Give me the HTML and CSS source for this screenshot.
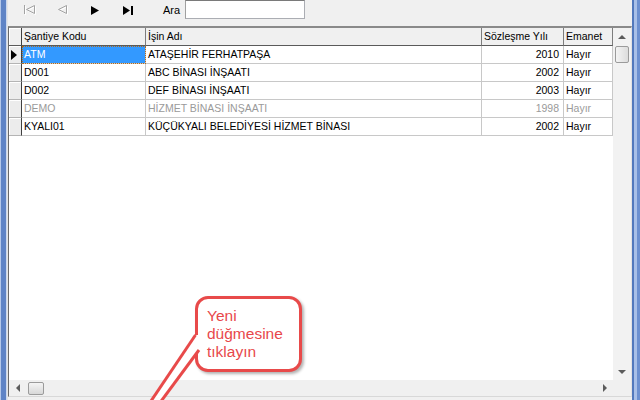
FILE: index.html
```html
<!DOCTYPE html>
<html lang="tr">
<head>
    <meta charset="UTF-8">
    <title>Şantiyeler</title>
    <link rel="stylesheet" href="styles.css">
</head>
<body>
    <div class="window">
        <div class="frame frame-left"></div>
        <div class="client">
            <div class="toolbar">
                <button class="nav-btn" disabled>
                    <svg width="14" height="11" viewBox="0 0 14 11">
                        <g transform="translate(1,1)" fill="none" stroke="#fff" stroke-width="1">
                            <line x1="1.5" y1="0" x2="1.5" y2="9"/>
                            <polygon points="11.5,0.5 3.5,4.5 11.5,8.5"/>
                        </g>
                        <g fill="none" stroke="#a3a3a3" stroke-width="1">
                            <line x1="1.5" y1="0" x2="1.5" y2="9"/>
                            <polygon points="11.5,0.5 3.5,4.5 11.5,8.5"/>
                        </g>
                    </svg>
                </button>
                <button class="nav-btn" disabled>
                    <svg width="12" height="11" viewBox="0 0 12 11">
                        <polygon transform="translate(1,1)" points="9.5,0.5 1.5,4.5 9.5,8.5" fill="none" stroke="#fff"/>
                        <polygon points="9.5,0.5 1.5,4.5 9.5,8.5" fill="none" stroke="#a3a3a3"/>
                    </svg>
                </button>
                <button class="nav-btn">
                    <svg width="9" height="9" viewBox="0 0 9 9">
                        <polygon points="0,0 8,4.5 0,9" fill="#000"/>
                    </svg>
                </button>
                <button class="nav-btn">
                    <svg width="11" height="9" viewBox="0 0 11 9">
                        <polygon points="0,0 7,4.5 0,9" fill="#000"/>
                        <rect x="8" y="0" width="2" height="9" fill="#000"/>
                    </svg>
                </button>
                <label class="search-label" for="search">Ara</label>
                <input id="search" class="search-input" type="text">
            </div>

            <div class="grid">
                <div class="grid-data">
                    <div class="row head">
                        <div class="cell ind"></div>
                        <div class="cell c-code">Şantiye Kodu</div>
                        <div class="cell c-name">İşin Adı</div>
                        <div class="cell c-year">Sözleşme Yılı</div>
                        <div class="cell c-flag">Emanet</div>
                    </div>
                    <div class="row current">
                        <div class="cell ind"><span class="pointer"></span></div>
                        <div class="cell c-code selected">ATM</div>
                        <div class="cell c-name">ATAŞEHİR FERHATPAŞA</div>
                        <div class="cell c-year num">2010</div>
                        <div class="cell c-flag">Hayır</div>
                    </div>
                    <div class="row">
                        <div class="cell ind"></div>
                        <div class="cell c-code">D001</div>
                        <div class="cell c-name">ABC BİNASI İNŞAATI</div>
                        <div class="cell c-year num">2002</div>
                        <div class="cell c-flag">Hayır</div>
                    </div>
                    <div class="row">
                        <div class="cell ind"></div>
                        <div class="cell c-code">D002</div>
                        <div class="cell c-name">DEF BİNASI İNŞAATI</div>
                        <div class="cell c-year num">2003</div>
                        <div class="cell c-flag">Hayır</div>
                    </div>
                    <div class="row passive">
                        <div class="cell ind"></div>
                        <div class="cell c-code">DEMO</div>
                        <div class="cell c-name">HİZMET BİNASI İNŞAATI</div>
                        <div class="cell c-year num">1998</div>
                        <div class="cell c-flag">Hayır</div>
                    </div>
                    <div class="row">
                        <div class="cell ind"></div>
                        <div class="cell c-code">KYALI01</div>
                        <div class="cell c-name">KÜÇÜKYALI BELEDİYESİ HİZMET BİNASI</div>
                        <div class="cell c-year num">2002</div>
                        <div class="cell c-flag">Hayır</div>
                    </div>
                </div>

                <div class="vscroll">
                    <div class="sb-btn"><span class="arrow up"></span></div>
                    <div class="sb-track vtrack"><div class="thumb vthumb"></div></div>
                    <div class="sb-btn"><span class="arrow down"></span></div>
                </div>
                <div class="hscroll">
                    <div class="sb-btn hbtn"><span class="arrow left"></span></div>
                    <div class="sb-track htrack"><div class="thumb hthumb"></div></div>
                    <div class="sb-btn hbtn"><span class="arrow right"></span></div>
                </div>
                <div class="corner"></div>
            </div>
        </div>
        <div class="frame frame-right"></div>
    </div>

    <!-- help balloon -->
    <div class="callout">Yeni<br>düğmesine<br>tıklayın</div>
    <svg class="callout-tail" width="640" height="400" viewBox="0 0 640 400">
        <polygon points="195,335 205,335 205,351 199,351 159,404 149,404" fill="#fff"/>
        <line x1="195.5" y1="335" x2="149" y2="404" stroke="#e84a4a" stroke-width="3"/>
        <line x1="199" y1="350" x2="159" y2="404" stroke="#e84a4a" stroke-width="3"/>
    </svg>
</body>
</html>
```

FILE: styles.css
```css
body {
    margin: 0;
    width: 640px;
    height: 400px;
    overflow: hidden;
    position: relative;
    font-family: "Liberation Sans", Arial, sans-serif;
    font-size: 10.5px;
    color: #000;
    background-color: #f0f0f0;
}
.window {
    display: flex;
    height: 400px;
}
.frame-left {
    width: 8px;
    background: linear-gradient(to right, #b4c8ea 0 1px, #5f84c6 1px 6px, #cbd8ee 6px 7px, #e4e4e4 7px);
}
.frame-right {
    width: 8px;
    background: linear-gradient(to right, #5279bd 0 2px, #a9c0e8 2px 5px, #6c90d0 5px);
}
.client {
    width: 624px;
    display: flex;
    flex-direction: column;
    background-color: #f0f0f0;
}

/* navigator + search */
.toolbar {
    height: 20px;
    padding: 0 0 6px 5px;
    display: flex;
    align-items: center;
}
.nav-btn {
    width: 33px;
    height: 20px;
    padding: 0;
    border: none;
    background: transparent;
    display: flex;
    align-items: center;
    justify-content: center;
}
.search-label {
    margin-left: 18px;
    font-size: 11px;
    color: #000;
}
.search-input {
    box-sizing: border-box;
    width: 120px;
    height: 19px;
    margin: 0 0 1px 5px;
    border: 1px solid #abadb3;
    border-top-color: #7a7a7a;
    border-left-color: #a0a0a0;
    background-color: #fff;
    padding: 0 2px;
    font: inherit;
}

/* grid */
.grid {
    height: 371px;
    box-sizing: border-box;
    border-top: 2px solid #8a8a8a;
    border-left: 1px solid #696969;
    border-right: 1px solid #e3e3e3;
    border-bottom: 1px solid #d8d8d8;
    display: grid;
    grid-template-columns: 604px 18px;
    grid-template-rows: 352px 16px;
}
.grid-data {
    background-color: #fff;
    overflow: hidden;
}
.row {
    display: flex;
    height: 18px;
}
.cell {
    box-sizing: border-box;
    height: 18px;
    line-height: 17px;
    padding: 0 2px;
    white-space: nowrap;
    overflow: hidden;
    border-right: 1px solid #c8c8c8;
    border-bottom: 1px solid #c8c8c8;
}
.ind {
    width: 13px;
    padding: 0;
    background-color: #ececec;
    border-right: 1px solid #404040;
    border-bottom: 1px solid #b4b4b4;
    box-shadow: inset 1px 1px 0 #fff;
    display: flex;
    align-items: center;
}
.c-code { width: 124px; }
.c-name { width: 336px; }
.c-year { width: 82px; }
.c-flag { width: 49px; }
.num {
    text-align: right;
    padding-right: 4px;
}
.head .cell {
    background-color: #f0f0f0;
    border-right-color: #7d7d7d;
    border-bottom-color: #5a5a5a;
}
.head .ind {
    border-right-color: #404040;
}
.pointer {
    width: 0;
    height: 0;
    margin-left: 2px;
    border-top: 5px solid transparent;
    border-bottom: 5px solid transparent;
    border-left: 6px solid #000;
}
.selected {
    background-color: #3399ff;
    color: #fff;
    outline: 1px dotted #b36b1a;
    outline-offset: -1px;
}
.passive .cell {
    color: #9a9a9a;
}

/* scrollbars */
.vscroll {
    display: flex;
    flex-direction: column;
    background-color: #f2f2f2;
}
.sb-btn {
    height: 17px;
    display: flex;
    align-items: center;
    justify-content: center;
}
.sb-track {
    flex: 1;
}
.thumb {
    box-sizing: border-box;
    border: 1px solid #9b9b9b;
    border-radius: 2px;
    background: linear-gradient(to right, #f4f4f4, #dcdcdc);
}
.vthumb {
    height: 17px;
    margin: 1px 2px 0;
}
.hscroll {
    display: flex;
    background-color: #f0f0f0;
}
.hbtn {
    height: 16px;
    width: 17px;
}
.htrack {
    display: flex;
}
.hthumb {
    width: 16px;
    height: 13px;
    margin: 2px 0 0 2px;
    background: linear-gradient(#f4f4f4, #d8d8d8);
}
.corner {
    background-color: #f0f0f0;
}
.arrow {
    width: 0;
    height: 0;
}
.arrow.up {
    border-left: 4px solid transparent;
    border-right: 4px solid transparent;
    border-bottom: 4px solid #5c5c5c;
}
.arrow.down {
    border-left: 4px solid transparent;
    border-right: 4px solid transparent;
    border-top: 4px solid #5c5c5c;
}
.arrow.left {
    border-top: 4px solid transparent;
    border-bottom: 4px solid transparent;
    border-right: 4px solid #5c5c5c;
}
.arrow.right {
    border-top: 4px solid transparent;
    border-bottom: 4px solid transparent;
    border-left: 4px solid #5c5c5c;
}

/* balloon */
.callout {
    position: absolute;
    left: 195px;
    top: 296px;
    width: 107px;
    height: 76px;
    box-sizing: border-box;
    padding: 8px 0 0 9px;
    border: 3px solid #e84a4a;
    border-radius: 13px;
    background-color: #fff;
    box-shadow: 2px 2px 3px rgba(0,0,0,0.3);
    color: #e8474b;
    font-size: 15.5px;
    line-height: 18px;
}
.callout-tail {
    position: absolute;
    left: 0;
    top: 0;
}
```
